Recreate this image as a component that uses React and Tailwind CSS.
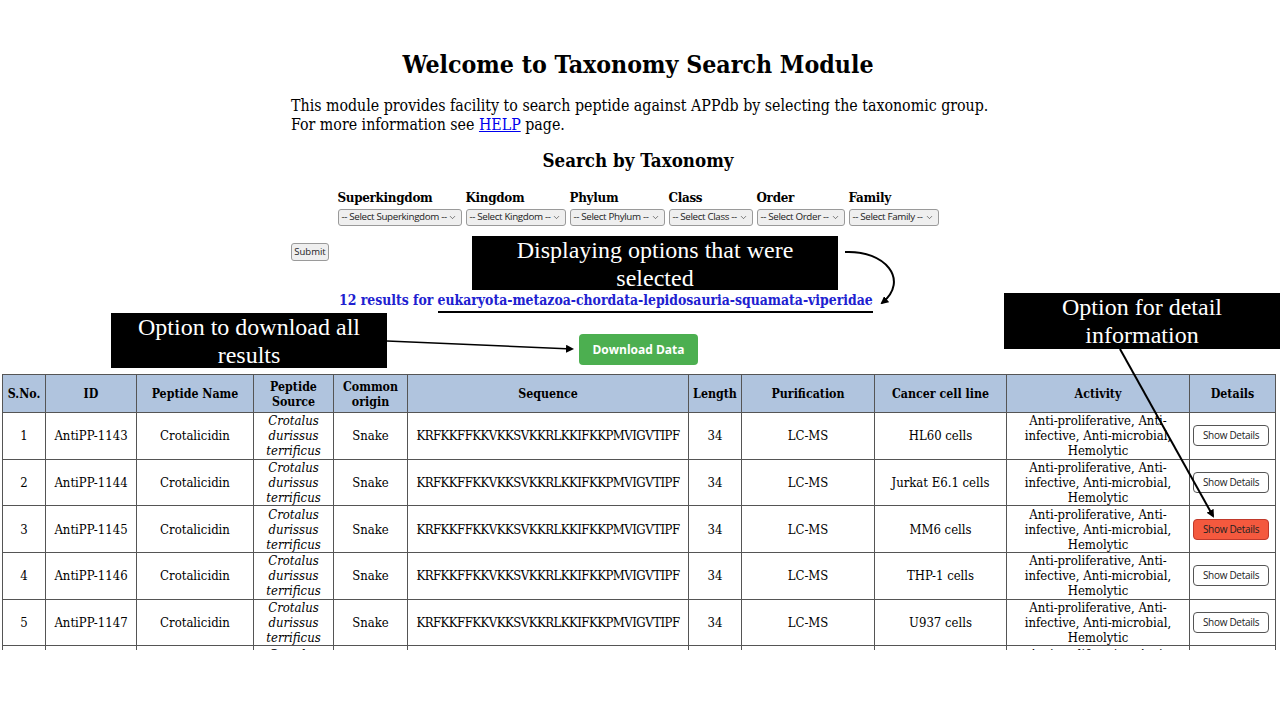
import { ChevronDown } from "lucide-react";

const serif = { fontFamily: '"DejaVu Serif", "Liberation Serif", serif' };
const sans = { fontFamily: '"Open Sans", "Noto Sans", sans-serif' };
const times = { fontFamily: '"Liberation Serif", serif' };

const selects = [
  { label: "Superkingdom", text: "-- Select Superkingdom --", w: "w-[124px]" },
  { label: "Kingdom", text: "-- Select Kingdom --", w: "w-[100px]" },
  { label: "Phylum", text: "-- Select Phylum --", w: "w-[95px]" },
  { label: "Class", text: "-- Select Class --", w: "w-[84px]" },
  { label: "Order", text: "-- Select Order --", w: "w-[88px]" },
  { label: "Family", text: "-- Select Family --", w: "w-[90px]" },
];

const cells = [
  ["1143", "HL60 cells"],
  ["1144", "Jurkat E6.1 cells"],
  ["1145", "MM6 cells"],
  ["1146", "THP-1 cells"],
  ["1147", "U937 cells"],
  ["1148", "K562 cells"],
];

const cols = [43, 91, 117, 80, 74, 281, 53, 133, 132, 183, 86];

export default function App() {
  return (
    <div className="relative w-[1280px] h-[720px] bg-white overflow-hidden text-black" style={serif}>
      <div className="h-[650px] overflow-hidden">
        <div className="w-[694px] ml-[291px] pt-[51px] font-stretch-condensed">
          <h1 className="text-center text-[24.7px] leading-[28px] font-bold">Welcome to Taxonomy Search Module</h1>
          <p className="mt-[17px] text-[15.8px] leading-[19px] whitespace-nowrap">
            This module provides facility to search peptide against APPdb by selecting the taxonomic group.
            <br />
            For more information see <a className="text-[#0000ee] underline">HELP</a> page.
          </p>
          <h2 className="mt-[15px] text-center text-[18.6px] leading-[24px] font-bold">Search by Taxonomy</h2>
          <div className="mt-[16px] flex justify-center gap-[4px]">
            {selects.map((s) => (
              <div key={s.label} className="flex flex-col gap-[2px]">
                <span className="text-[13.3px] leading-[18px] font-bold tracking-[-0.3px]">{s.label}</span>
                <div
                  className={`${s.w} h-[17px] flex items-center justify-between pl-[3px] pr-[4px] bg-[#efefef] border border-[#9a9a9a] rounded-[3px] text-[9.8px] text-[#222] overflow-hidden font-stretch-normal`}
                  style={sans}
                >
                  <span className="whitespace-nowrap tracking-[-0.35px]">{s.text}</span>
                  <ChevronDown size={9} strokeWidth={1.5} className="shrink-0" />
                </div>
              </div>
            ))}
          </div>
          <button
            className="mt-[17px] w-[38px] h-[18px] bg-[#efefef] border border-[#9a9a9a] rounded-[3px] text-[9.5px] text-[#222] flex items-center justify-center font-stretch-normal"
            style={sans}
          >
            Submit
          </button>
          <p className="mt-[30px] ml-[48px] text-[13.85px] leading-[18px] font-bold text-[#2020d0] whitespace-nowrap">
            12 results for <a>eukaryota-metazoa-chordata-lepidosauria-squamata-viperidae</a>
          </p>
        </div>
        <div className="mt-[25px] flex justify-center">
          <button
            className="-ml-[3px] w-[119px] h-[31px] bg-[#4caf50] rounded-[4px] text-white text-[12px] font-bold flex items-center justify-center"
            style={sans}
          >
            Download Data
          </button>
        </div>
        <table className="mt-[9px] ml-[2px] w-[1273px] table-fixed border-collapse text-[13px] leading-[15px] font-stretch-condensed">
          <colgroup>
            {cols.map((w, i) => (
              <col key={i} style={{ width: w }} />
            ))}
          </colgroup>
          <thead>
            <tr className="bg-[#b0c4de] h-[38px]">
              {["S.No.", "ID", "Peptide Name", "Peptide Source", "Common origin", "Sequence", "Length", "Purification", "Cancer cell line", "Activity", "Details"].map((h) => (
                <th key={h} className="border border-[#555] px-[2px] font-bold text-center text-[12.3px]">
                  {h === "Peptide Source" ? (
                    <>Peptide<br />Source</>
                  ) : h === "Common origin" ? (
                    <>Common<br />origin</>
                  ) : (
                    h
                  )}
                </th>
              ))}
            </tr>
          </thead>
          <tbody>
            {cells.map(([id, line], i) => (
              <tr key={id} className="h-[46.7px] text-center">
                <td className="border border-[#555]">{i + 1}</td>
                <td className="border border-[#555]">AntiPP-{id}</td>
                <td className="border border-[#555]">Crotalicidin</td>
                <td className="border border-[#555] italic">
                  Crotalus
                  <br />
                  durissus
                  <br />
                  terrificus
                </td>
                <td className="border border-[#555]">Snake</td>
                <td className="border border-[#555] whitespace-nowrap tracking-[-0.5px]">KRFKKFFKKVKKSVKKRLKKIFKKPMVIGVTIPF</td>
                <td className="border border-[#555]">34</td>
                <td className="border border-[#555]">LC-MS</td>
                <td className="border border-[#555]">{line}</td>
                <td className="border border-[#555] px-[6px]">Anti-proliferative, Anti-infective, Anti-microbial, Hemolytic</td>
                <td className="border border-[#555]">
                  <button
                    className={`w-[76px] h-[21px] ml-[3px] flex items-center justify-center rounded-[4px] border text-[10px] tracking-[-0.3px] font-stretch-normal ${
                      i === 2 ? "bg-[#f4593e] border-[#c0392b] text-[#222]" : "bg-white border-[#555] text-[#222]"
                    }`}
                    style={sans}
                  >
                    Show Details
                  </button>
                </td>
              </tr>
            ))}
          </tbody>
        </table>
      </div>

      {/* annotation boxes */}
      <div
        className="absolute left-[472px] top-[236px] w-[366px] h-[54px] bg-black text-white text-[24px] leading-[28px] text-center"
        style={times}
      >
        Displaying options that were
        <br />
        selected
      </div>
      <div
        className="absolute left-[111px] top-[313px] w-[276px] h-[55px] bg-black text-white text-[24px] leading-[28px] text-center"
        style={times}
      >
        Option to download all
        <br />
        results
      </div>
      <div
        className="absolute left-[1004px] top-[293px] w-[276px] h-[56px] bg-black text-white text-[24px] leading-[28px] text-center"
        style={times}
      >
        Option for detail
        <br />
        information
      </div>

      <svg className="absolute inset-0 pointer-events-none" width="1280" height="720">
        <defs>
          <marker id="ah" markerWidth="8" markerHeight="8" refX="6" refY="4" orient="auto" markerUnits="userSpaceOnUse">
            <path d="M0 0 L8 4 L0 8 Z" fill="black" />
          </marker>
        </defs>
        <path d="M845 252 C 885 250, 910 280, 882 303" stroke="black" strokeWidth="2" fill="none" markerEnd="url(#ah)" />
        <line x1="438" y1="312" x2="873" y2="312" stroke="black" strokeWidth="2" />
        <line x1="387" y1="341" x2="572" y2="349" stroke="black" strokeWidth="1.5" markerEnd="url(#ah)" />
        <line x1="1120" y1="349" x2="1213" y2="516" stroke="black" strokeWidth="2" markerEnd="url(#ah)" />
      </svg>
    </div>
  );
}
